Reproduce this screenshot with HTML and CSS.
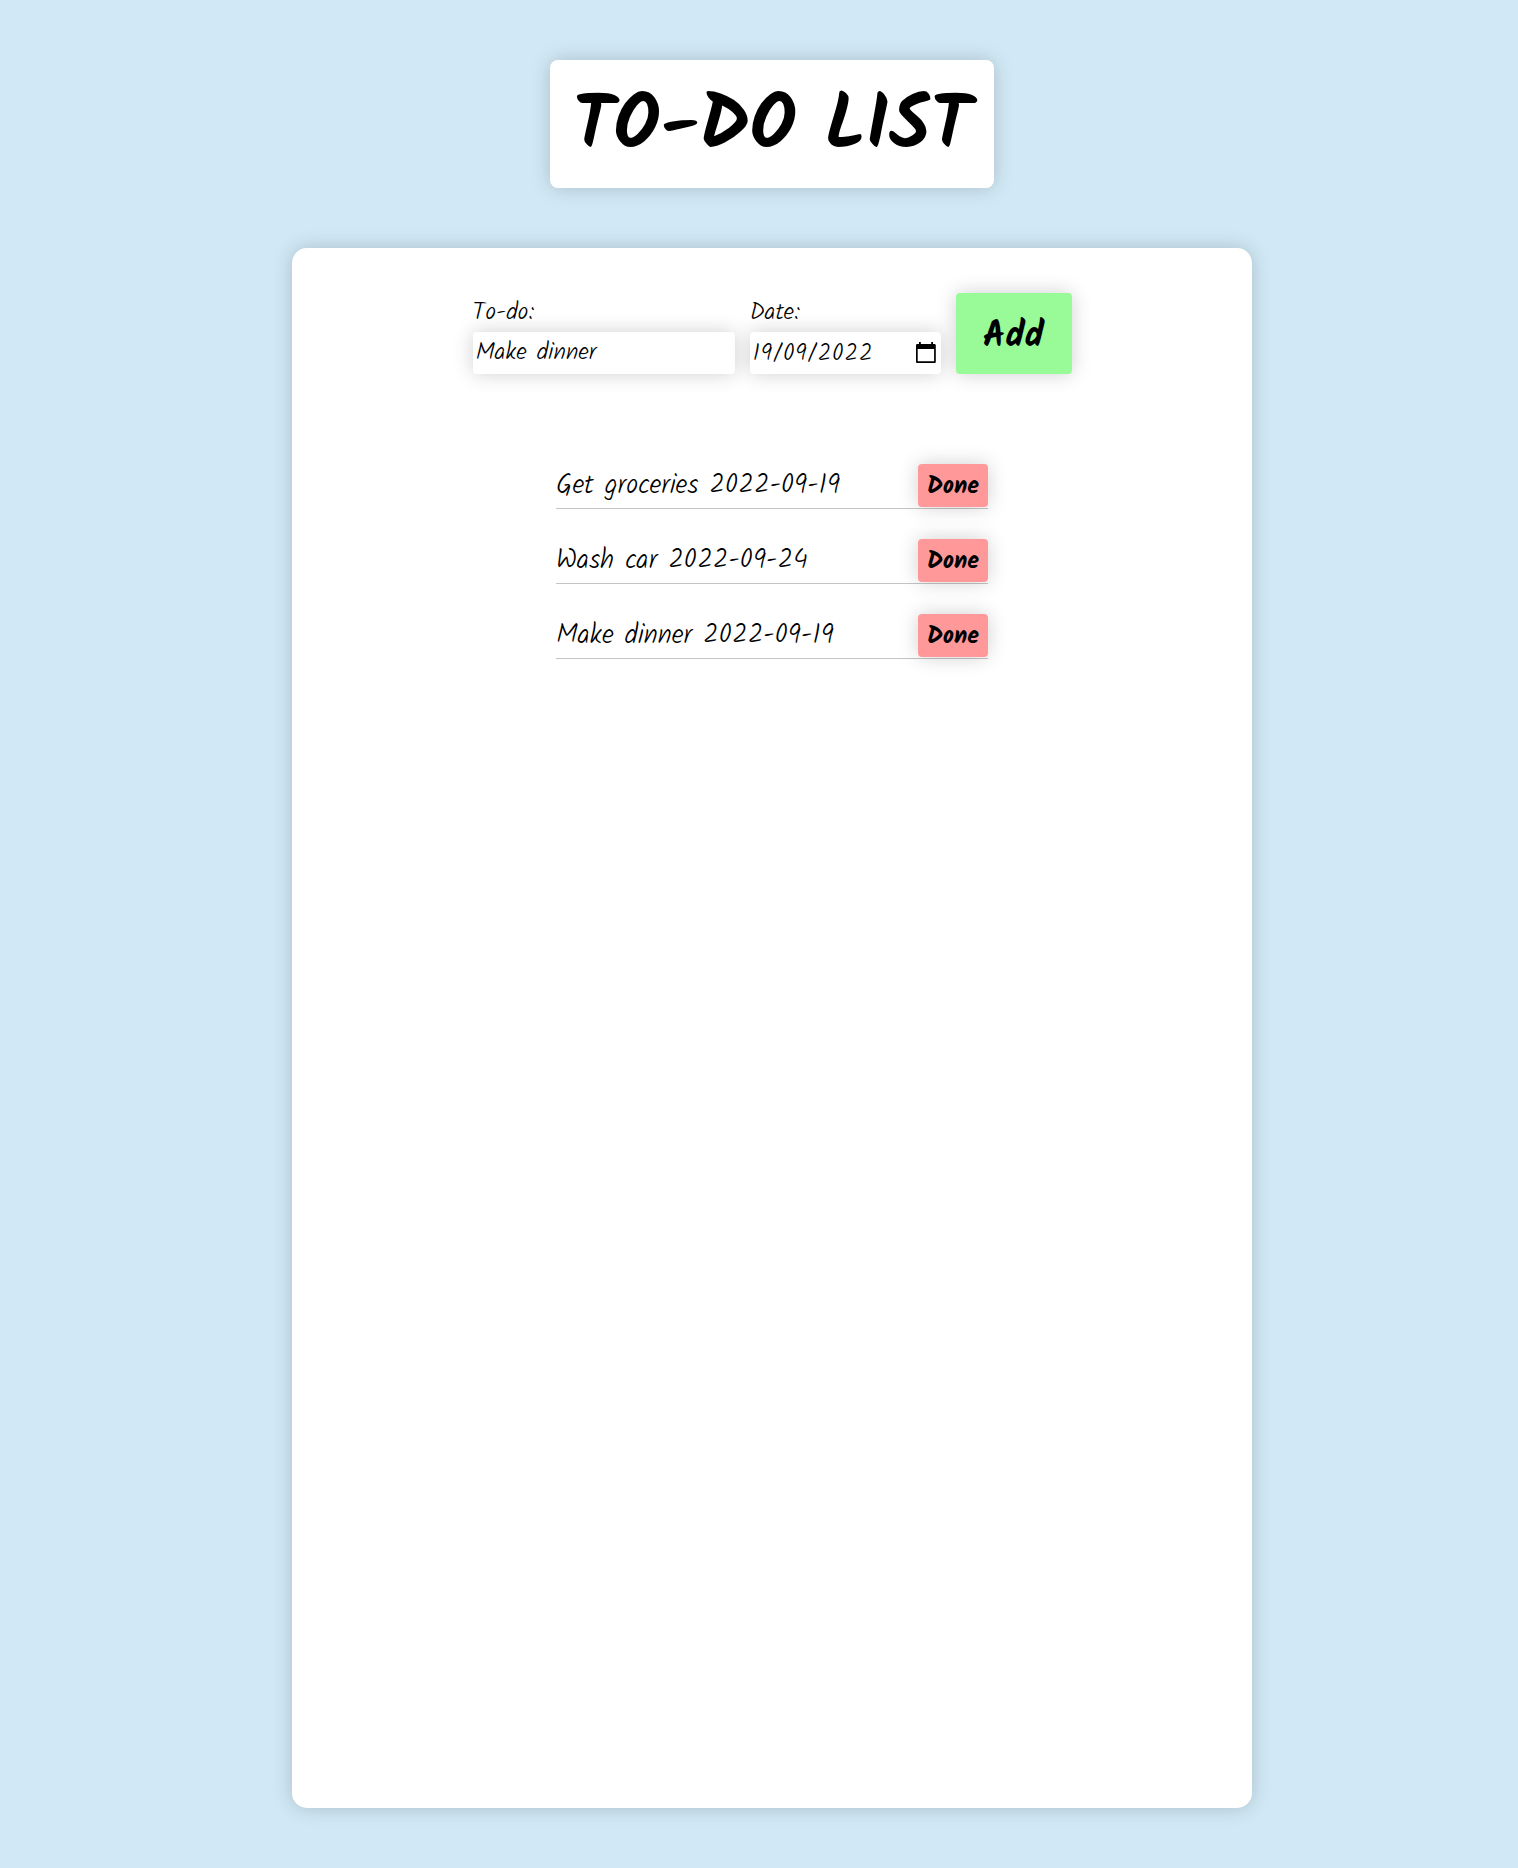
FILE: index.html
```html
<!DOCTYPE html>
<html lang="en">
<head>
<meta charset="utf-8">
<title>To-do list</title>
<link rel="stylesheet" href="styles.css">
</head>
<body>
<main class="page">
  <h1 class="title">TO-DO LIST</h1>
  <section class="board">
    <form class="form">
      <label class="field field-todo">To-do:
        <input class="control" type="text" value="Make dinner">
      </label>
      <div class="field field-date">Date:
        <div class="control date">
          <span class="date-value">19/09/2022</span>
          <svg class="calendar" viewBox="0 0 24 24"><path fill-rule="evenodd" d="M20.5 3H19V1h-1.800v2H6.800V1H5v2H3.300C2.600 3 2 3.600 2 4.300V20.700C2 21.400 2.600 22 3.300 22H20.500C21.200 22 21.800 21.400 21.800 20.700V4.300C21.800 3.600 21.200 3 20.500 3zM3.700 8H20.100V20.300H3.700z"/></svg>
        </div>
      </div>
      <button class="add" type="button">Add</button>
    </form>
    <ul class="list">
      <li class="item"><span>Get groceries 2022-09-19</span><button class="done" type="button">Done</button></li>
      <li class="item"><span>Wash car 2022-09-24</span><button class="done" type="button">Done</button></li>
      <li class="item"><span>Make dinner 2022-09-19</span><button class="done" type="button">Done</button></li>
    </ul>
  </section>
</main>
</body>
</html>
```
FILE: styles.css
```css
* {
  box-sizing: border-box;
  margin: 0;
  padding: 0;
}

body {
  background: #d1e9f6;
  color: #000;
  font-family: Kalam, Lato, cursive;
  font-weight: 300;
}

.page {
  display: flex;
  flex-direction: column;
  align-items: center;
  gap: 60px;
  height: 1868px;
  padding: 60px 0 60px 26px;
}

.title {
  width: 444px;
  height: 128px;
  padding-top: 4px;
  border-radius: 8px;
  background: #fff;
  box-shadow: 0 0 20px rgba(0, 0, 0, 0.19);
  font-size: 75px;
  font-weight: 700;
  line-height: 128px;
  text-align: center;
}

.board {
  display: flex;
  flex: 1;
  flex-direction: column;
  align-items: center;
  gap: 90px;
  width: 960px;
  padding-top: 45px;
  border-radius: 15px;
  background: #fff;
  box-shadow: 0 0 20px rgba(0, 0, 0, 0.19);
}

.form {
  display: flex;
  align-items: flex-end;
  gap: 15px;
  height: 81px;
}

.field {
  display: block;
  font-size: 24px;
  line-height: 39px;
}

.field-todo {
  width: 262px;
}

.field-date {
  width: 191px;
}

.control {
  display: block;
  width: 100%;
  height: 42px;
  padding: 1px 2px 3px 3px;
  border: 0;
  border-radius: 4px;
  background: #fff;
  box-shadow: 0 0 20px rgba(0, 0, 0, 0.19);
  color: #000;
  font: 300 24px/38px Kalam, Lato, cursive;
}

.date {
  display: flex;
  align-items: center;
  justify-content: space-between;
  padding: 2px;
}

.date-value {
  padding: 2px 0 0 1px;
  letter-spacing: 0.6px;
}

.calendar {
  width: 24px;
  height: 24px;
  margin-right: 1px;
}

.add,
.done {
  border: 0;
  border-radius: 4px;
  box-shadow: 0 0 20px rgba(0, 0, 0, 0.19);
  color: #000;
  font-family: inherit;
  font-weight: 700;
}

.add {
  width: 116px;
  height: 81px;
  padding-top: 6px;
  background: #98fb98;
  font-size: 36px;
}

.list {
  display: flex;
  flex-direction: column;
  gap: 30px;
  width: 432px;
  list-style: none;
}

.item {
  display: flex;
  align-items: flex-start;
  justify-content: space-between;
  height: 45px;
  border-bottom: 1px solid #c4c4c4;
  font-size: 27px;
  line-height: 43px;
}

.done {
  width: 70px;
  height: 43px;
  padding-top: 2px;
  background: #ff9999;
  font-size: 24px;
}
```
